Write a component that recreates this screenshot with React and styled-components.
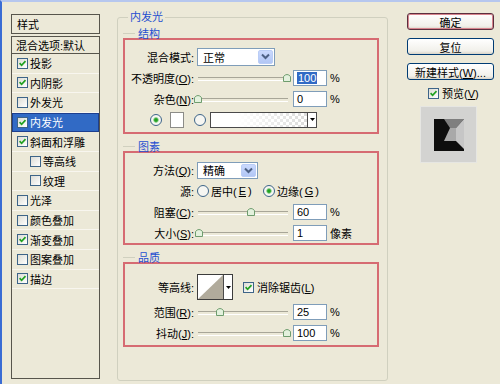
import styled, { createGlobalStyle, css } from 'styled-components'

const colors = {
  face: '#ece9d8',
  frame: '#57554c',
  groupLine: '#d0d0bf',
  title: '#1f4fd0',
  mark: '#d66b72',
  field: '#7f9db9',
  checkLine: '#3d6488',
  check: '#21a121',
  select: '#316ac5',
}

const GlobalStyle = createGlobalStyle`
  html, body { margin: 0; padding: 0; background: ${colors.face}; }
  body {
    font-family: "Liberation Sans", "Noto Sans CJK SC", sans-serif;
    font-size: 11px;
    color: #000;
  }
  * { box-sizing: border-box; }
`

const Dialog = styled.div`
  width: 500px;
  height: 384px;
  background: ${colors.face};
  border-top: 2px solid #b6c7ee;
  border-left: 2px solid #3a6cd4;
  display: flex;
  align-items: flex-start;
  overflow: hidden;
`

/* left: style list */

const StyleColumn = styled.div`
  margin: 12px 0 0 9px;
  width: 89px;
  height: 365px;
  display: flex;
  flex-direction: column;
  gap: 2px;
`

const ListHeader = styled.div`
  height: 20px;
  border: 1px solid ${colors.frame};
  padding-left: 5px;
  display: flex;
  align-items: center;
`

const ListBody = styled.div`
  flex: 1;
  border: 1px solid ${colors.frame};
  display: flex;
  flex-direction: column;
`

const BlendRow = styled.div`
  height: 17px;
  flex: none;
  border-bottom: 1px solid ${colors.frame};
  padding-left: 4px;
  display: flex;
  align-items: center;
  white-space: nowrap;
`

const StyleItem = styled.div`
  height: 19.6px;
  flex: none;
  display: flex;
  align-items: center;
  gap: 2px;
  padding-left: ${p => (p.$indent ? 18 : 5)}px;
  border-bottom: 1px solid #f8f6ef;
  white-space: nowrap;

  ${p => p.$active && css`
    background: ${colors.select};
    color: #fff;
    outline: 1px solid #1d3f8f;
    outline-offset: -1px;
  `}
`

/* middle: inner glow group */

const EffectGroup = styled.fieldset`
  margin: 8px 0 0 17px;
  width: 271px;
  height: 371px;
  padding: 0 5px;
  border: 1px solid ${colors.groupLine};
  border-radius: 3px;
  min-width: 0;
`

const GroupLegend = styled.legend`
  margin-left: 5px;
  padding: 0 2px;
  color: ${colors.title};
  line-height: 14px;
`

const SectionTitle = styled.div`
  height: 10px;
  margin-top: ${p => p.$gap}px;
  display: flex;
  align-items: center;
  gap: 3px;
  color: ${colors.title};

  &::before {
    content: '';
    width: 12px;
    border-top: 1px solid ${colors.groupLine};
  }
`

const MarkBox = styled.div`
  width: 256px;
  border: 2px solid ${colors.mark};
  padding: ${p => p.$pad};
  display: flex;
  flex-direction: column;
`

const FieldRow = styled.div`
  height: ${p => p.$h || 21}px;
  flex: none;
  display: flex;
  align-items: center;
  padding-left: ${p => p.$inset || 0}px;
  white-space: nowrap;
`

const FieldLabel = styled.span`
  width: 69px;
  flex: none;
  text-align: right;
  margin-right: 3px;
`

const SliderWell = styled.div`
  position: relative;
  width: 93px;
  height: 12px;
  flex: none;

  &::before {
    content: '';
    position: absolute;
    left: 1px;
    right: 2px;
    top: 5px;
    height: 2px;
    border-top: 1px solid #a8a698;
    border-bottom: 1px solid #fff;
  }
`

const Thumb = styled.svg`
  position: absolute;
  top: 1px;
`

const ValueBox = styled.span`
  width: 34px;
  height: 16px;
  flex: none;
  margin-left: 3px;
  border: 1px solid ${colors.field};
  background: #fff;
  padding-left: 3px;
  line-height: 14px;
`

const Picked = styled.span`
  background: ${colors.select};
  color: #fff;
  padding: 0 1px;
`

const Unit = styled.span`
  margin-left: 3px;
`

const Combo = styled.div`
  width: ${p => p.$w}px;
  height: ${p => p.$h}px;
  flex: none;
  border: 1px solid ${colors.field};
  background: #fff;
  padding: 1px;
  display: flex;
`

const ComboText = styled.span`
  flex: 1;
  padding-left: 4px;
  display: flex;
  align-items: center;
`

const ComboButton = styled.span`
  width: 15px;
  border: 1px solid #bacdf6;
  border-radius: 2px;
  background: linear-gradient(#cad9fd, #b2c7f5);
  display: flex;
  align-items: center;
  justify-content: center;
`

const ColorSwatch = styled.span`
  width: 14px;
  height: 16px;
  margin: 0 10px 0 8px;
  border: 1px solid #8c8c88;
  background: #fff;
`

const GradientPicker = styled.span`
  width: 107px;
  height: 16px;
  margin-left: 4px;
  border: 1px solid #4a4a4a;
  display: flex;
  background:
    linear-gradient(to right, #fff 25%, rgba(255, 255, 255, 0) 95%),
    repeating-conic-gradient(#d9d9d9 0 25%, #fff 0 50%) 0 0 / 6px 6px;
`

const PickerArrow = styled.span`
  width: 9px;
  margin-left: auto;
  border-left: 1px solid #4a4a4a;
  background: #fff;
  display: flex;
  align-items: center;
  justify-content: center;
`

const RadioOption = styled.span`
  width: ${p => p.$w || 'auto'};
  display: flex;
  align-items: center;
  gap: 2px;
`

const ContourPicker = styled.span`
  width: 36px;
  height: 26px;
  margin-right: 10px;
  border: 1px solid #3c3c3c;
  display: flex;
`

const ContourCurve = styled.svg`
  flex: 1;
  height: 100%;
`

const CheckText = styled.span`
  margin-left: 3px;
`

/* right: buttons and preview */

const ActionColumn = styled.div`
  margin: 11px 0 0 19px;
  width: 87px;
  display: flex;
  flex-direction: column;
`

const ActionButton = styled.button`
  height: 17px;
  margin-bottom: ${p => p.$after || 8}px;
  padding: 0;
  font: inherit;
  color: #000;
  border: 1px solid #003c74;
  border-radius: 3px;
  background: linear-gradient(#ffffff, #f1f0ea 80%, #d9d4c8);
  white-space: nowrap;

  ${p => p.$primary && css`
    border-color: #5b2f3e;
    box-shadow: inset 0 0 0 1px #d7848d;
  `}
`

const PreviewToggle = styled.div`
  height: 14px;
  padding-left: 21px;
  display: flex;
  align-items: center;
`

const PreviewTile = styled.div`
  width: 57px;
  height: 57px;
  margin: 6px 0 0 13px;
  background: #d3d3d1;
  border: 1px solid #e6e6e2;
  display: flex;
  align-items: center;
  justify-content: center;
`

const CheckFrame = styled.span`
  width: 11px;
  height: 11px;
  flex: none;
  border: 1px solid ${colors.checkLine};
  background: linear-gradient(135deg, #dcdcd5, #ffffff);
  display: inline-flex;
`

const Checkbox = ({ checked }) => (
  <CheckFrame>
    {checked && (
      <svg width="9" height="9" viewBox="0 0 9 9">
        <path d="M1.6 4.2 L3.6 6.3 L7.5 2.1" fill="none" stroke={colors.check} strokeWidth="1.7" />
      </svg>
    )}
  </CheckFrame>
)

const Radio = ({ checked }) => (
  <svg width="12" height="12" viewBox="0 0 12 12" style={{ flex: 'none' }}>
    <circle cx="6" cy="6" r="5.5" fill="#f6f6f2" stroke={colors.checkLine} />
    {checked && <circle cx="6" cy="6" r="2.4" fill={colors.check} stroke="#9ad69a" strokeWidth="0.8" />}
  </svg>
)

const Chevron = () => (
  <svg width="9" height="7" viewBox="0 0 9 7">
    <path d="M1 1.5 L4.5 5 L8 1.5" fill="none" stroke="#4d6185" strokeWidth="2" />
  </svg>
)

const SmallArrow = () => (
  <svg width="5" height="3" viewBox="0 0 5 3">
    <polygon points="0,0 5,0 2.5,3" fill="#000" />
  </svg>
)

const Slider = ({ value }) => (
  <SliderWell>
    <Thumb width="8" height="9" viewBox="0 0 8 9" style={{ left: `${value * 89 - 3}px` }}>
      <path d="M0.5 3.5 Q4 -0.5 7.5 3.5 L7.5 8.5 L0.5 8.5 Z" fill="#e3f1dd" stroke="#6e9c6e" />
    </Thumb>
  </SliderWell>
)

const SliderRow = ({ label, value, text, unit = '%', picked }) => (
  <FieldRow>
    <FieldLabel>{label}</FieldLabel>
    <Slider value={value} />
    <ValueBox>{picked ? <Picked>{text}</Picked> : text}</ValueBox>
    <Unit>{unit}</Unit>
  </FieldRow>
)

const styleItems = [
  { name: '投影', checked: true },
  { name: '内阴影', checked: true },
  { name: '外发光', checked: false },
  { name: '内发光', checked: true, active: true },
  { name: '斜面和浮雕', checked: true },
  { name: '等高线', checked: false, indent: true },
  { name: '纹理', checked: false, indent: true },
  { name: '光泽', checked: false },
  { name: '颜色叠加', checked: false },
  { name: '渐变叠加', checked: true },
  { name: '图案叠加', checked: false },
  { name: '描边', checked: true },
]

const App = () => (
  <>
    <GlobalStyle />
    <Dialog>
      <StyleColumn>
        <ListHeader>样式</ListHeader>
        <ListBody>
          <BlendRow>混合选项:默认</BlendRow>
          {styleItems.map(item => (
            <StyleItem key={item.name} $indent={item.indent} $active={item.active}>
              <Checkbox checked={item.checked} />
              {item.name}
            </StyleItem>
          ))}
        </ListBody>
      </StyleColumn>

      <EffectGroup>
        <GroupLegend>内发光</GroupLegend>

        <SectionTitle $gap={4}>结构</SectionTitle>
        <MarkBox $pad="6px 0 2px">
          <FieldRow>
            <FieldLabel>混合模式:</FieldLabel>
            <Combo $w={78} $h={18}>
              <ComboText>正常</ComboText>
              <ComboButton><Chevron /></ComboButton>
            </Combo>
          </FieldRow>
          <SliderRow label={<>不透明度(<u>O</u>):</>} value={1} text="100" picked />
          <SliderRow label={<>杂色(<u>N</u>):</>} value={0} text="0" />
          <FieldRow $inset={25}>
            <Radio checked />
            <ColorSwatch />
            <Radio />
            <GradientPicker>
              <PickerArrow><SmallArrow /></PickerArrow>
            </GradientPicker>
          </FieldRow>
        </MarkBox>

        <SectionTitle $gap={7}>图素</SectionTitle>
        <MarkBox $pad="7px 0 0">
          <FieldRow $h={20.5}>
            <FieldLabel>方法(<u>Q</u>):</FieldLabel>
            <Combo $w={61} $h={17}>
              <ComboText>精确</ComboText>
              <ComboButton><Chevron /></ComboButton>
            </Combo>
          </FieldRow>
          <FieldRow $h={20.5}>
            <FieldLabel>源:</FieldLabel>
            <RadioOption $w="66px"><Radio />居中(<u>E</u>)</RadioOption>
            <RadioOption><Radio checked />边缘(<u>G</u>)</RadioOption>
          </FieldRow>
          <SliderRow label={<>阻塞(<u>C</u>):</>} value={0.6} text="60" />
          <SliderRow label={<>大小(<u>S</u>):</>} value={0.01} text="1" unit="像素" />
        </MarkBox>

        <SectionTitle $gap={7}>品质</SectionTitle>
        <MarkBox $pad="9px 0 2px">
          <FieldRow $h={28}>
            <FieldLabel>等高线:</FieldLabel>
            <ContourPicker>
              <ContourCurve viewBox="0 0 26 24" preserveAspectRatio="none">
                <rect width="26" height="24" fill="#fff" />
                <polygon points="0,24 26,0 26,24" fill="#b1ab9c" />
              </ContourCurve>
              <PickerArrow><SmallArrow /></PickerArrow>
            </ContourPicker>
            <Checkbox checked />
            <CheckText>消除锯齿(<u>L</u>)</CheckText>
          </FieldRow>
          <SliderRow label={<>范围(<u>R</u>):</>} value={0.25} text="25" />
          <SliderRow label={<>抖动(<u>J</u>):</>} value={1} text="100" />
        </MarkBox>
      </EffectGroup>

      <ActionColumn>
        <ActionButton $primary>确定</ActionButton>
        <ActionButton>复位</ActionButton>
        <ActionButton $after={6}>新建样式(<u>W</u>)...</ActionButton>
        <PreviewToggle>
          <Checkbox checked />
          <CheckText>预览(<u>V</u>)</CheckText>
        </PreviewToggle>
        <PreviewTile>
          <svg width="30" height="32" viewBox="0 0 30 32">
            <rect width="30" height="32" fill="#0e0e0e" />
            <polygon points="10,0 30,0 22,9 16,9" fill="#7f7f7f" />
            <polygon points="30,0 30,30 22,22 22,9" fill="#c6c6c6" />
            <polygon points="16,9 22,9 22,22 10,22" fill="#a9a9a9" />
          </svg>
        </PreviewTile>
      </ActionColumn>
    </Dialog>
  </>
)

export default App
